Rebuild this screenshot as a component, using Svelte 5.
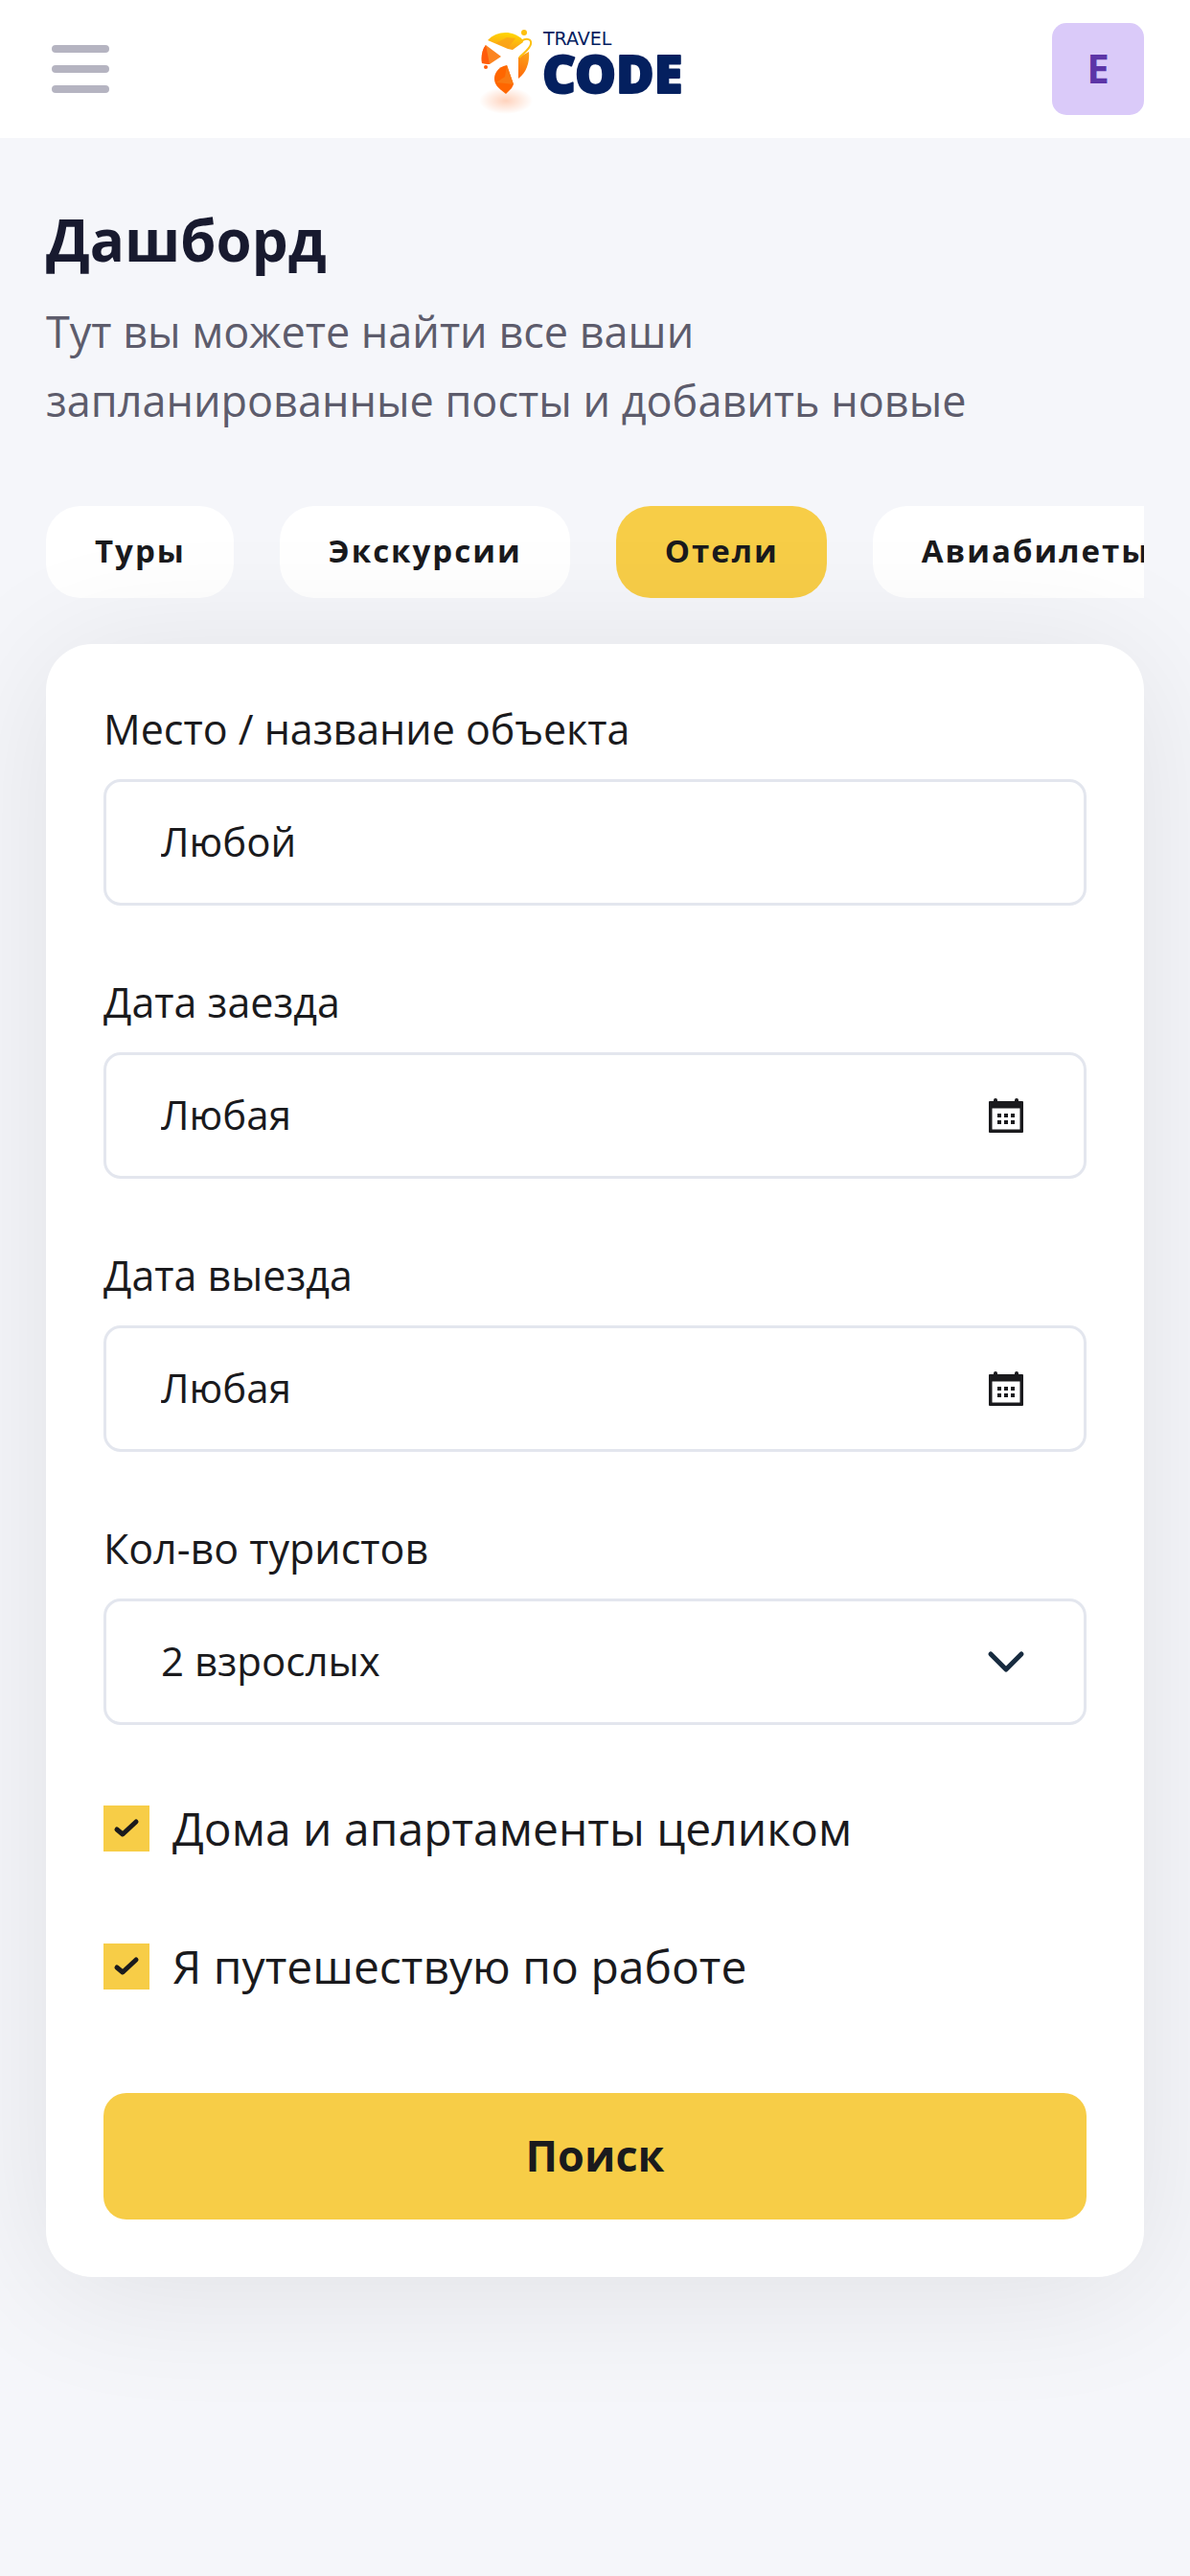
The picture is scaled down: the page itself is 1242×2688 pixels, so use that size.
<script>
	let activeTab = 'Отели';
	let place = 'Любой';
	let checkIn = 'Любая';
	let checkOut = 'Любая';
	let guests = '2';
	let wholeHome = true;
	let business = true;

	const tabs = ['Туры', 'Экскурсии', 'Отели', 'Авиабилеты'];
</script>

<header class="topbar">
	<button class="burger" type="button" aria-label="Меню">
		<span></span>
		<span></span>
		<span></span>
	</button>

	<a class="logo" href="#home" aria-label="Travel Code">
		<svg width="240" height="96" viewBox="0 0 240 96">
			<defs>
				<linearGradient id="dome" x1="0.6" y1="0" x2="0.4" y2="1">
					<stop offset="0" stop-color="#ffd800" />
					<stop offset="1" stop-color="#fb9d1c" />
				</linearGradient>
				<linearGradient id="side" x1="0.6" y1="0" x2="0.4" y2="1">
					<stop offset="0" stop-color="#fba31a" />
					<stop offset="1" stop-color="#ff6a0a" />
				</linearGradient>
				<radialGradient id="glow">
					<stop offset="0" stop-color="#ff6a20" stop-opacity="0.3" />
					<stop offset="1" stop-color="#ff6a20" stop-opacity="0" />
				</radialGradient>
			</defs>
			<ellipse cx="27" cy="81" rx="28" ry="14" fill="url(#glow)" />
			<path d="M8 18 C17 8 34 7 44 17 L45 20 L34 28 L29 27 Z" fill="url(#dome)" />
			<path d="M28 15 L37 16 L29 26 L17 21 Z" fill="#f9a01a" opacity="0.7" />
			<path d="M6 23 L22 35 L10 43 L2 42 C1 35 2 28 6 23 Z" fill="#fb8420" />
			<path d="M6 23 L10 43 L2 42 C1 35 2 28 6 23 Z" fill="#ff5b0a" />
			<path d="M28 44 L35 64 L33 68 L27 74 C18 67 15 64 15 58 C15 53 18 46 28 44 Z" fill="#ff6600" />
			<path d="M28 44 L35 64 L17 62 L26 56 Z" fill="#f97a12" />
			<path d="M40 36 L51 30 C52 42 48 52 40 58 Z" fill="url(#side)" />
			<path d="M43 19 C49 15 54 17 53 22 C52 27 46 31 41 36" fill="none" stroke="#fdc010" stroke-width="2" />
			<circle cx="46" cy="10" r="3" fill="#fdc010" />
			<circle cx="6" cy="46" r="2" fill="#ff5b0a" />
			<text class="logo-top" x="66" y="23">TRAVEL</text>
			<text class="logo-main" x="65" y="73">CODE</text>
		</svg>
	</a>

	<button class="avatar" type="button">E</button>
</header>

<main>
	<h1>Дашборд</h1>
	<p class="lead">Тут вы можете найти все ваши запланированные посты и добавить новые</p>

	<nav class="tabs">
		{#each tabs as tab}
			<button
				type="button"
				class="tab"
				class:active={tab === activeTab}
				on:click={() => (activeTab = tab)}>{tab}</button>
		{/each}
	</nav>

	<form class="card" on:submit|preventDefault>
		<div class="field">
			<label for="place">Место / название объекта</label>
			<div class="control">
				<input id="place" type="text" bind:value={place} />
			</div>
		</div>

		<div class="field">
			<label for="check-in">Дата заезда</label>
			<div class="control">
				<input id="check-in" type="text" bind:value={checkIn} />
				{@render calendar()}
			</div>
		</div>

		<div class="field">
			<label for="check-out">Дата выезда</label>
			<div class="control">
				<input id="check-out" type="text" bind:value={checkOut} />
				{@render calendar()}
			</div>
		</div>

		<div class="field">
			<label for="guests">Кол-во туристов</label>
			<div class="control">
				<select id="guests" bind:value={guests}>
					<option value="1">1 взрослый</option>
					<option value="2">2 взрослых</option>
					<option value="3">3 взрослых</option>
				</select>
				<svg class="icon" viewBox="0 0 42 42">
					<path d="M5 13 L21 29 L37 13" fill="none" stroke="#172b3f" stroke-width="5" stroke-linecap="round" stroke-linejoin="round" />
				</svg>
			</div>
		</div>

		<label class="check">
			<input type="checkbox" bind:checked={wholeHome} />
			<svg viewBox="0 0 48 48"><path d="M14 25 L20 30 L34 17" /></svg>
			<span>Дома и апартаменты целиком</span>
		</label>

		<label class="check">
			<input type="checkbox" bind:checked={business} />
			<svg viewBox="0 0 48 48"><path d="M14 25 L20 30 L34 17" /></svg>
			<span>Я путешествую по работе</span>
		</label>

		<button class="submit" type="submit">Поиск</button>
	</form>
</main>

{#snippet calendar()}
	<svg class="icon" viewBox="0 0 42 42" fill="#1a1a1d">
		<path fill-rule="evenodd" d="M4 6 H38 Q39 6 39 7 V38 Q39 39 38 39 H4 Q3 39 3 38 V7 Q3 6 4 6 Z M6.5 13.5 V35.5 H35.5 V13.5 Z" />
		<path d="M8 8 V5 a2 2 0 0 1 4 0 V8 Z M30 8 V5 a2 2 0 0 1 4 0 V8 Z" />
		<path d="M12 19 h4 v4 h-4 Z M19 19 h4 v4 h-4 Z M26 19 h4 v4 h-4 Z M12 26 h4 v4 h-4 Z M19 26 h4 v4 h-4 Z M26 26 h4 v4 h-4 Z" />
	</svg>
{/snippet}

<style>
	:global(body) {
		min-height: 100vh;
		background: #f5f6fa;
		font-family: 'Open Sans', 'Noto Sans', sans-serif;
		color: #1a1a1d;
	}
	button,
	input,
	select {
		font-family: inherit;
		color: inherit;
	}
	button {
		border: 0;
		cursor: pointer;
	}
	.topbar {
		display: grid;
		grid-template-columns: 1fr auto 1fr;
		align-items: center;
		height: 144px;
		padding: 0 48px;
		background: #fff;
	}
	.burger {
		display: flex;
		flex-direction: column;
		justify-self: start;
		gap: 13px;
		padding: 6px;
		background: none;
	}
	.burger span {
		width: 60px;
		height: 8px;
		border-radius: 4px;
		background: #b5b4c1;
	}
	.logo {
		display: flex;
	}
	.logo-top {
		font: 19px 'DejaVu Sans', sans-serif;
		fill: #04205f;
	}
	.logo-main {
		font: 900 54px 'Noto Sans', sans-serif;
		fill: #04205f;
		stroke: #04205f;
		stroke-width: 2;
		stroke-linejoin: round;
	}
	.avatar {
		justify-self: end;
		width: 96px;
		height: 96px;
		padding: 0 0 4px;
		border-radius: 15px;
		background: #dacaf9;
		color: #5c35a7;
		font-size: 42px;
		font-weight: 700;
	}
	main {
		box-sizing: border-box;
		min-height: calc(100vh - 144px);
		padding: 70px 48px;
	}
	h1 {
		margin: 0;
		font-size: 60px;
		line-height: 72px;
		color: #181a2f;
	}
	.lead {
		max-width: 90%;
		margin: 24px 0 74px;
		font-size: 45px;
		line-height: 72px;
		color: #5d5c6c;
	}
	.tabs {
		display: flex;
		gap: 48px;
		overflow: hidden;
	}
	.tab {
		flex: none;
		height: 96px;
		padding: 0 50px 4px 51px;
		border-radius: 36px;
		background: #fff;
		font-size: 33px;
		font-weight: 700;
		letter-spacing: 2px;
	}
	.tab.active {
		background: #f7cd47;
	}
	.card {
		position: relative;
		margin-top: 48px;
		padding: 60px;
		border-radius: 48px;
		background: #fff;
		box-shadow: 0 12px 144px rgba(0, 0, 0, 0.09);
	}
	.field {
		margin-bottom: 72px;
	}
	.field label {
		display: block;
		margin-bottom: 24px;
		font-size: 43px;
		line-height: 57px;
	}
	.control {
		display: flex;
		align-items: center;
		box-sizing: border-box;
		height: 132px;
		padding: 0 60px 0 57px;
		border: 3px solid #e3e6ee;
		border-radius: 18px;
	}
	.control input,
	.control select {
		flex: 1;
		min-width: 0;
		padding: 0 0 4px;
		border: 0;
		outline: 0;
		appearance: none;
		background: none;
		font-size: 42px;
	}
	.icon {
		flex: none;
		width: 42px;
		height: 42px;
	}
	.check {
		display: grid;
		grid-template-columns: 48px 1fr;
		align-items: center;
		column-gap: 24px;
		margin-bottom: 72px;
		font-size: 48px;
		line-height: 72px;
	}
	.check input,
	.check svg {
		grid-area: 1 / 1;
		width: 48px;
		height: 48px;
		margin: 0;
	}
	.check input {
		appearance: none;
		background: #f7cd47;
	}
	.check path {
		fill: none;
		stroke: #1a1a1d;
		stroke-width: 5;
		stroke-linecap: round;
		stroke-linejoin: round;
	}
	.check input:not(:checked) + svg {
		visibility: hidden;
	}
	.submit {
		display: block;
		width: 100%;
		height: 132px;
		margin-top: 96px;
		padding: 0 0 4px;
		border-radius: 24px;
		background: #f7cd47;
		font-size: 45px;
		font-weight: 700;
	}
</style>
